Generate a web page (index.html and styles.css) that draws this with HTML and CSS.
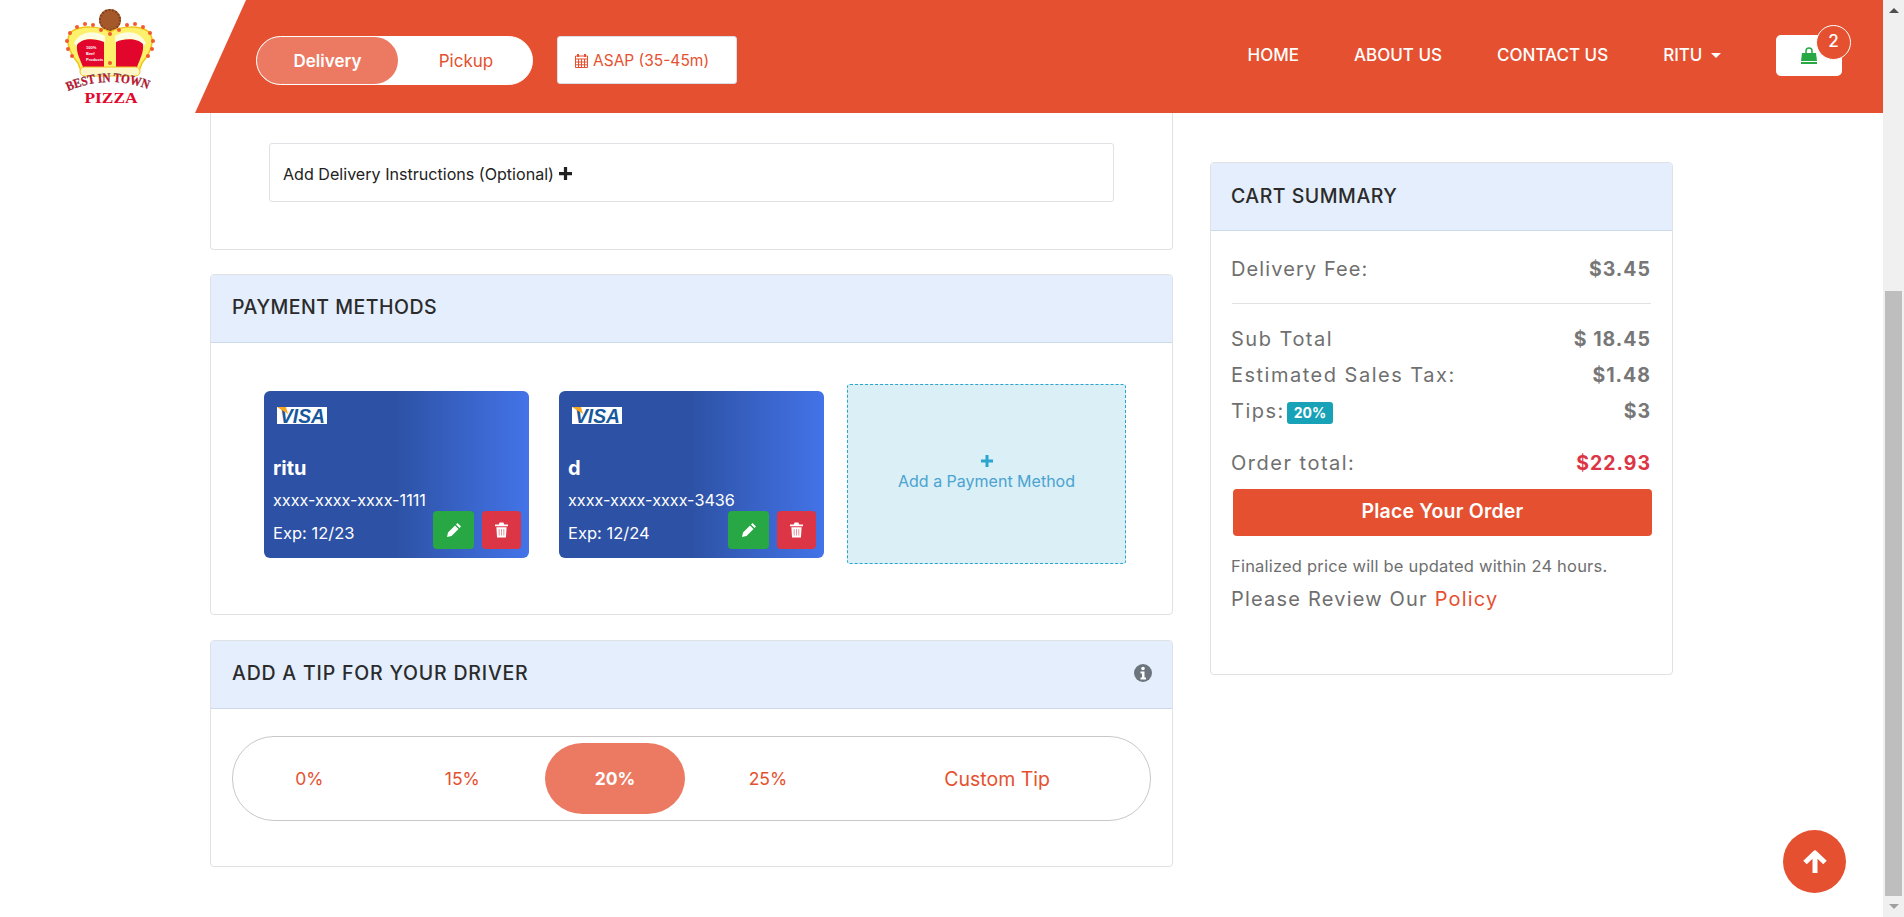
FILE: index.html
```html
<!DOCTYPE html>
<html lang="en">
  <head>
    <title>Best In Town Pizza - Checkout</title>
    <link rel="stylesheet" href="styles.css">
  </head>
  <body>
    <div class="page">
      <header class="topBar">
        <a class="logo" href="#">
          <svg width="100" height="100" viewBox="0 0 100 100">
            <defs>
              <path id="logoArc" d="M8 86 Q50 68 92 86"/>
            </defs>
            <ellipse cx="50" cy="15" rx="11" ry="11" fill="#a5592b"/>
            <ellipse cx="50" cy="15" rx="10" ry="10" fill="none" stroke="#7c3d1a" stroke-width="2" stroke-dasharray="1.500 2"/>
            <path d="M50 27C40 21 20 20 11 27C5 34 8 46 18 58L21 66H79L82 58C92 46 95 34 89 27C80 20 60 21 50 27Z" fill="#fdf06a" stroke="#f0c419" stroke-width="1.500"/>
            <path d="M14 38C20 25 36 25 45 31L45 38C34 32 22 32 17 42Z" fill="#fffde0"/>
            <path d="M86 38C80 25 64 25 55 31L55 38C66 32 78 32 83 42Z" fill="#fffde0"/>
            <path d="M17 40C22 33 34 33 44 37C44 46 44 54 44 62H23C20 54 16 47 17 40Z" fill="#e2062c"/>
            <path d="M56 37C64 33 78 33 83 39C84 47 80 54 77 62H56C56 54 56 46 56 37Z" fill="#e2062c"/>
            <rect x="20" y="62" width="60" height="9" rx="4.500" fill="#fff6c8" stroke="#f0c419"/>
            <g fill="#ef5b2f">
              <circle cx="8" cy="44" r="2"/><circle cx="7" cy="36" r="2"/><circle cx="10" cy="28" r="2"/>
              <circle cx="17" cy="22" r="2"/><circle cx="25" cy="19" r="2"/><circle cx="33" cy="20" r="2"/>
              <circle cx="41" cy="25" r="2"/><circle cx="50" cy="29" r="2"/><circle cx="59" cy="25" r="2"/>
              <circle cx="67" cy="20" r="2"/><circle cx="75" cy="19" r="2"/><circle cx="83" cy="22" r="2"/>
              <circle cx="90" cy="28" r="2"/><circle cx="93" cy="36" r="2"/><circle cx="92" cy="44" r="2"/>
              <circle cx="12" cy="51" r="2"/><circle cx="88" cy="51" r="2"/><circle cx="50" cy="58" r="2"/>
            </g>
            <text class="logoTiny" x="26" y="44">100%</text>
            <text class="logoTiny" x="26" y="50">Beef</text>
            <text class="logoTiny" x="26" y="56">Products</text>
            <text class="logoBest" textLength="82" lengthAdjust="spacingAndGlyphs"><textPath href="#logoArc" textLength="82" lengthAdjust="spacingAndGlyphs">BEST IN TOWN</textPath></text>
            <text class="logoPizza" x="51" y="98" text-anchor="middle" textLength="53" lengthAdjust="spacingAndGlyphs">PIZZA</text>
          </svg>
        </a>
        <div class="headerBar">
          <div class="orderType">
            <span class="orderTypeItem orderTypeActive">Delivery</span>
            <span class="orderTypeItem">Pickup</span>
          </div>
          <button class="timeButton">
            <svg class="calendarIcon" width="13" height="15" viewBox="0 0 13 15">
              <path d="M.5 3h12v11.500H.5zM.5 6h12M3.500 6v8.500M6.500 6v8.500M9.500 6v8.500M.5 9h12M.5 11.800h12" fill="none" stroke="#e55130"/>
              <path d="M3 1v3M10 1v3" stroke="#e55130" stroke-width="2"/>
            </svg>
            ASAP (35-45m)
          </button>
          <nav class="mainNav">
            <a href="#">HOME</a>
            <a href="#">ABOUT US</a>
            <a href="#">CONTACT US</a>
            <a href="#">RITU <span class="caret"></span></a>
            <a class="cartButton" href="#">
              <svg width="18" height="18" viewBox="0 0 18 18">
                <path d="M6 7V4a3 3 0 0 1 6 0v3" fill="none" stroke="#28a745" stroke-width="1.500"/>
                <path d="M2 6h14l1 8H1z" fill="#28a745"/>
                <path d="M1 15h16v2H1z" fill="#28a745"/>
              </svg>
              <span class="cartCount">2</span>
            </a>
          </nav>
        </div>
      </header>

      <main class="checkout">
        <div class="leftColumn">
          <section class="card instructionsCard">
            <div class="instructionsBox">
              Add Delivery Instructions (Optional)
              <svg width="13" height="13" viewBox="0 0 12 12"><path d="M4.500 0h3v4.500H12v3H7.500V12h-3V7.500H0v-3h4.500z" fill="#222"/></svg>
            </div>
          </section>

          <section class="card paymentCard">
            <div class="cardHeader">PAYMENT METHODS</div>
            <div class="paymentBody">
              <div class="creditCard">
                <svg class="visaLogo" width="50" height="17" viewBox="0 0 50 17">
                  <rect width="50" height="17" fill="#fff"/>
                  <text x="3" y="15.500" class="visaText" textLength="45" lengthAdjust="spacingAndGlyphs">VISA</text>
                  <path d="M0 0h9l2 7z" fill="#f7a823"/>
                </svg>
                <div class="cardName">ritu</div>
                <div class="cardNumber">xxxx-xxxx-xxxx-1111</div>
                <div class="cardFooter">
                  <span class="cardExp">Exp: 12/23</span>
                  <button class="iconButton editButton">
                    <svg width="16" height="16" viewBox="0 0 16 16"><path d="M11.500 1l3.500 3.500-1.500 1.500L10 2.500zM9 3.500L12.500 7l-7 7L1 15l1-4.500z" fill="#fff"/></svg>
                  </button>
                  <button class="iconButton deleteButton">
                    <svg width="13" height="16" viewBox="0 0 14 16"><path d="M5 0h4l1 2h4v2H0V2h4zM1.500 5h11l-.7 11H2.200z" fill="#fff"/><path d="M4.500 7v7M7 7v7M9.500 7v7" stroke="#e58a96" stroke-width="1"/></svg>
                  </button>
                </div>
              </div>
              <div class="creditCard">
                <svg class="visaLogo" width="50" height="17" viewBox="0 0 50 17">
                  <rect width="50" height="17" fill="#fff"/>
                  <text x="3" y="15.500" class="visaText" textLength="45" lengthAdjust="spacingAndGlyphs">VISA</text>
                  <path d="M0 0h9l2 7z" fill="#f7a823"/>
                </svg>
                <div class="cardName">d</div>
                <div class="cardNumber">xxxx-xxxx-xxxx-3436</div>
                <div class="cardFooter">
                  <span class="cardExp">Exp: 12/24</span>
                  <button class="iconButton editButton">
                    <svg width="16" height="16" viewBox="0 0 16 16"><path d="M11.500 1l3.500 3.500-1.500 1.500L10 2.500zM9 3.500L12.500 7l-7 7L1 15l1-4.500z" fill="#fff"/></svg>
                  </button>
                  <button class="iconButton deleteButton">
                    <svg width="13" height="16" viewBox="0 0 14 16"><path d="M5 0h4l1 2h4v2H0V2h4zM1.500 5h11l-.7 11H2.200z" fill="#fff"/><path d="M4.500 7v7M7 7v7M9.500 7v7" stroke="#e58a96" stroke-width="1"/></svg>
                  </button>
                </div>
              </div>
              <a class="addPayment" href="#">
                <svg width="12" height="12" viewBox="0 0 12 12"><path d="M4.500 0h3v4.500H12v3H7.500V12h-3V7.500H0v-3h4.500z" fill="#2ba5cf"/></svg>
                <span>Add a Payment Method</span>
              </a>
            </div>
          </section>

          <section class="card tipCard">
            <div class="cardHeader tipHeader">
              ADD A TIP FOR YOUR DRIVER
              <svg width="18" height="18" viewBox="0 0 18 18">
                <circle cx="9" cy="9" r="9" fill="#6c757d"/>
                <circle cx="9" cy="4.500" r="1.800" fill="#fff"/>
                <path d="M6.500 7.500h4v6h1.500v2H6.500v-2H8v-4H6.500z" fill="#fff"/>
              </svg>
            </div>
            <div class="tipBody">
              <div class="tipOptions">
                <span class="tipOption">0%</span>
                <span class="tipOption">15%</span>
                <span class="tipOption tipActive">20%</span>
                <span class="tipOption">25%</span>
                <span class="tipOption customTip">Custom Tip</span>
              </div>
            </div>
          </section>
        </div>

        <aside class="card summaryCard">
          <div class="cardHeader summaryHeader">CART SUMMARY</div>
          <div class="summaryBody">
            <div class="summaryRow feeRow"><span>Delivery Fee:</span><b>$3.45</b></div>
            <hr class="summaryRule">
            <div class="summaryRow"><span>Sub Total</span><b>$ 18.45</b></div>
            <div class="summaryRow"><span>Estimated Sales Tax:</span><b>$1.48</b></div>
            <div class="summaryRow"><span>Tips: <em class="tipBadge">20%</em></span><b>$3</b></div>
            <div class="summaryRow totalRow"><span>Order total:</span><b>$22.93</b></div>
            <button class="placeOrder">Place Your Order</button>
            <p class="finalNote">Finalized price will be updated within 24 hours.</p>
            <p class="policyNote">Please Review Our <a href="#">Policy</a></p>
          </div>
        </aside>
      </main>

      <a class="scrollTop" href="#">
        <svg width="26" height="24" viewBox="0 0 26 24"><path d="M3 12.500L13 3l10 9.500M13 4v19" fill="none" stroke="#fff" stroke-width="5" stroke-linejoin="round"/></svg>
      </a>
    </div>

    <div class="scrollbar">
      <span class="scrollArrow scrollArrowUp"></span>
      <span class="scrollThumb"></span>
      <span class="scrollArrow scrollArrowDown"></span>
    </div>
  </body>
</html>
```

FILE: styles.css
```css
* {
  box-sizing: border-box;
}
html, body {
  height: 100%;
}
body {
  margin: 0;
  display: flex;
  height: 917px;
  overflow: hidden;
  background-color: white;
  color: #2b2b2b;
  font-family: 'Inter', 'Open Sans', sans-serif;
}
a {
  text-decoration: none;
  color: inherit;
}
button {
  font-family: inherit;
  border: none;
  cursor: pointer;
}
.page {
  flex: 1;
  position: relative;
  overflow: hidden;
}

/* header */
.topBar {
  display: flex;
  height: 113px;
}
.logo {
  width: 195px;
  flex: none;
  padding: 5px 0 0 60px;
}
.logoTiny {
  font: bold 4px 'Liberation Sans', sans-serif;
  fill: white;
}
.logoBest {
  font: bold 13px 'Liberation Serif', serif;
  fill: #e2062c;
  stroke: #444;
  stroke-width: 0.300px;
}
.logoPizza {
  font: bold 15px 'Liberation Serif', serif;
  fill: #e2062c;
}
.headerBar {
  flex: 1;
  display: flex;
  align-items: flex-start;
  padding: 36px 41px 0 61px;
  background-color: #e55130;
  clip-path: polygon(51px 0, 100% 0, 100% 100%, 0 100%);
}
.orderType {
  display: flex;
  width: 277px;
  height: 49px;
  border: 1px solid white;
  border-radius: 25px;
  background-color: white;
  font-size: 17px;
}
.orderTypeItem {
  display: flex;
  align-items: center;
  justify-content: center;
  flex: 1;
  padding-left: 2px;
  color: #e55130;
}
.orderTypeActive {
  flex: none;
  width: 141px;
  padding-left: 0;
  border-radius: 25px;
  background-color: #ec7a63;
  color: white;
  font-weight: 600;
}
.timeButton {
  display: flex;
  align-items: center;
  gap: 5px;
  width: 180px;
  height: 48px;
  margin-left: 24px;
  padding: 0 0 0 17px;
  border: 1px solid #d6dfea;
  border-radius: 3px;
  background-color: white;
  color: #e55130;
  font-size: 15.500px;
}
.mainNav {
  display: flex;
  align-items: center;
  gap: 55px;
  height: 41px;
  margin: -1px 0 0 auto;
  color: white;
  font-size: 17px;
  font-weight: 500;
}
.mainNav a:not(.cartButton) {
  margin-top: -2px;
}
.caret {
  display: inline-block;
  margin-left: 4px;
  vertical-align: 3px;
  border-top: 5px solid white;
  border-left: 5px solid transparent;
  border-right: 5px solid transparent;
}
.cartButton {
  position: relative;
  display: flex;
  align-items: center;
  width: 66px;
  height: 41px;
  padding-left: 24px;
  border-radius: 5px;
  background-color: white;
}
.cartCount {
  position: absolute;
  top: -10px;
  right: -9px;
  width: 35px;
  height: 35px;
  border: 1px solid white;
  border-radius: 50%;
  background-color: #e55130;
  color: white;
  font-size: 17px;
  line-height: 31px;
  text-align: center;
}

/* page columns */
.checkout {
  display: flex;
  gap: 37px;
  padding-left: 210px;
}
.leftColumn {
  width: 963px;
  flex: none;
}
.card {
  border: 1px solid #dfe1e5;
  border-radius: 4px;
  background-color: white;
}
.cardHeader {
  height: 68px;
  padding-left: 21px;
  border-bottom: 1px solid #cdd8ea;
  border-radius: 3px 3px 0 0;
  background-color: #e4eefd;
  font-size: 19.500px;
  font-weight: 500;
  letter-spacing: 0.500px;
  line-height: 64px;
}
.summaryHeader {
  padding-left: 20px;
  line-height: 66px;
}

/* delivery instructions */
.instructionsCard {
  height: 137px;
  padding: 30px 58px 0;
  border-top: none;
  border-radius: 0 0 4px 4px;
}
.instructionsBox {
  display: flex;
  align-items: center;
  gap: 5px;
  height: 59px;
  padding: 2px 0 0 13px;
  border: 1px solid #dfe1e5;
  border-radius: 3px;
  color: #222;
  font-size: 16.100px;
}

/* payment methods */
.paymentCard {
  height: 341px;
  margin-top: 24px;
}
.paymentBody {
  display: flex;
  align-items: center;
  padding: 41px 0 0 53px;
}
.creditCard {
  display: flex;
  flex-direction: column;
  width: 265px;
  height: 167px;
  margin-right: 30px;
  padding: 16px 8px 8px 9px;
  border-radius: 6px;
  background: linear-gradient(90deg, #2d52a5 50%, #4373e8 100%);
  color: white;
}
.creditCard + .addPayment {
  margin-left: -7px;
}
.visaLogo {
  margin-left: 4px;
  overflow: visible;
}
.visaText {
  font: italic bold 20px 'Liberation Sans', sans-serif;
  fill: #17579c;
}
.cardName {
  margin-top: 32px;
  font-size: 20px;
  font-weight: 700;
  line-height: 24px;
}
.cardNumber {
  margin-top: 10px;
  font-size: 16.200px;
  line-height: 20px;
}
.cardFooter {
  display: flex;
  align-items: flex-end;
  gap: 8px;
  margin-top: 1px;
}
.cardExp {
  flex: 1;
  align-self: center;
  padding-top: 6px;
  font-size: 16.500px;
}
.iconButton {
  display: flex;
  align-items: center;
  justify-content: center;
  height: 38px;
  padding: 0;
  border-radius: 4px;
}
.editButton {
  width: 41px;
  background-color: #28a745;
}
.deleteButton {
  width: 39px;
  background-color: #dc3545;
}
.addPayment {
  display: flex;
  flex-direction: column;
  align-items: center;
  justify-content: center;
  gap: 4px;
  width: 279px;
  height: 180px;
  padding-bottom: 2px;
  border: 1px dashed #2ba5cf;
  border-radius: 3px;
  background-color: #daeff6;
  color: #4aa3d0;
  font-size: 16px;
}

/* tip */
.tipCard {
  height: 227px;
  margin-top: 25px;
}
.tipHeader {
  display: flex;
  align-items: center;
  justify-content: space-between;
  padding: 0 20px 3px 21px;
  letter-spacing: 0.800px;
  line-height: normal;
}
.tipBody {
  padding: 27px 21px 0;
}
.tipOptions {
  display: grid;
  grid-template-columns: repeat(4, 1fr) 2fr;
  height: 85px;
  border: 1px solid #c8c8c8;
  border-radius: 42px;
  color: #e55130;
  font-size: 17.500px;
}
.tipOption {
  display: flex;
  align-items: center;
  justify-content: center;
}
.customTip {
  font-size: 19.500px;
}
.tipActive {
  margin: 6px 6px;
  border-radius: 38px / 36px;
  background-color: #ec7a63;
  color: white;
  font-weight: 700;
}

/* cart summary */
.summaryCard {
  width: 463px;
  height: 513px;
  margin-top: 49px;
}
.summaryBody {
  padding: 0 21px;
  color: #6f6f6f;
}
.summaryRow {
  display: flex;
  align-items: center;
  justify-content: space-between;
  height: 36px;
  font-size: 20px;
  letter-spacing: 1.500px;
}
.summaryRow span {
  margin-left: -1px;
}
.summaryRow b {
  color: #777;
  font-size: 19.500px;
  font-weight: 700;
  letter-spacing: 1px;
}
.feeRow {
  margin-top: 20px;
}
.feeRow span {
  letter-spacing: 1.100px;
}
.summaryRule {
  margin: 16px 0 17px;
  border: none;
  border-top: 1px solid #e2e2e2;
}
.tipBadge {
  display: inline-block;
  width: 46px;
  height: 22px;
  margin-left: -5px;
  border-radius: 3px;
  background-color: #17a2b8;
  color: white;
  font-size: 14px;
  font-style: normal;
  font-weight: 700;
  letter-spacing: 0;
  line-height: 22px;
  text-align: center;
}
.totalRow {
  margin-top: 16px;
}
.totalRow b {
  color: #dc3545;
}
.placeOrder {
  display: block;
  width: 419px;
  height: 47px;
  margin: 8px 0 0 1px;
  padding-bottom: 4px;
  border-radius: 4px;
  background-color: #e55130;
  color: white;
  font-size: 19.500px;
  font-weight: 600;
  letter-spacing: 0.200px;
}
.finalNote {
  margin: 21px 0 0 -1px;
  font-size: 16.500px;
  letter-spacing: 0.200px;
  line-height: 18px;
}
.policyNote {
  margin: 11px 0 0 -1px;
  font-size: 20px;
  letter-spacing: 1.200px;
  line-height: 26px;
}
.policyNote a {
  color: #e55130;
}

/* overlay button */
.scrollTop {
  position: absolute;
  left: 1783px;
  top: 830px;
  display: flex;
  align-items: center;
  justify-content: center;
  width: 63px;
  height: 63px;
  border-radius: 50%;
  background-color: #e55130;
}

/* window scrollbar */
.scrollbar {
  display: flex;
  flex-direction: column;
  width: 21px;
  flex: none;
  padding: 0 2px;
  background-color: #f0f0f0;
}
.scrollArrow {
  flex: none;
  height: 0;
  align-self: center;
  border-left: 5px solid transparent;
  border-right: 5px solid transparent;
}
.scrollArrowUp {
  margin-top: 8px;
  border-bottom: 5px solid #505050;
}
.scrollThumb {
  flex: none;
  height: 605px;
  margin-top: 278px;
  background-color: #bebebe;
}
.scrollArrowDown {
  margin-top: 8px;
  border-top: 5px solid #a0a0a0;
}
```
